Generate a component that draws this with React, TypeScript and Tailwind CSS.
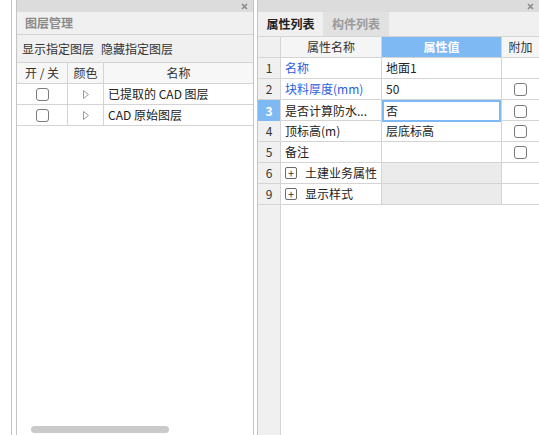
import React from "react";

const font = { fontFamily: '"Noto Sans CJK SC", "Noto Sans", sans-serif' };

function Box() {
  return <div className="w-[13px] h-[13px] rounded-[3px] border border-[#7a7a7a] bg-white" />;
}

function PlusBox() {
  return (
    <div className="w-[12px] h-[12px] rounded-[2px] border border-[#6a6a6a] bg-white flex items-center justify-center text-[11px] leading-none text-[#333]">
      +
    </div>
  );
}

function TitleBar() {
  return (
    <div className="h-[12px] bg-[#dcdcdc] flex items-center justify-end pr-[5px]">
      <svg width="7" height="7" viewBox="0 0 7 7">
        <path d="M1 1 L6 6 M6 1 L1 6" stroke="#8a8a8a" strokeWidth="1.6" />
      </svg>
    </div>
  );
}

const layers = ["已提取的 CAD 图层", "CAD 原始图层"];

type Row = {
  n: string;
  name: string;
  value: string;
  blue?: boolean;
  check?: boolean;
  selected?: boolean;
  group?: boolean;
};

const rows: Row[] = [
  { n: "1", name: "名称", value: "地面1", blue: true },
  { n: "2", name: "块料厚度(mm)", value: "50", blue: true, check: true },
  { n: "3", name: "是否计算防水...", value: "否", check: true, selected: true },
  { n: "4", name: "顶标高(m)", value: "层底标高", check: true },
  { n: "5", name: "备注", value: "", check: true },
  { n: "6", name: "土建业务属性", value: "", group: true },
  { n: "9", name: "显示样式", value: "", group: true },
];

export default function App() {
  return (
    <div className="flex h-[435px] w-[539px] bg-white text-[12px] text-[#222] overflow-hidden" style={font}>
      <div className="w-[11px]" />
      <div className="w-[5px] border-l border-[#c4c4c4]" />

      {/* 图层管理 */}
      <div className="w-[238px] border-x border-[#c4c4c4] flex flex-col">
        <TitleBar />
        <div className="h-[23px] bg-[#f0f0f0] border-b border-[#d4d4d4] flex items-center pl-[8px] text-[#8a8a8a] font-bold">
          图层管理
        </div>
        <div className="h-[28px] bg-[#f0f0f0] border-b border-[#d4d4d4] flex items-center pl-[5px] gap-[7px] text-[#333]">
          <span>显示指定图层</span>
          <span>隐藏指定图层</span>
        </div>
        <div className="grid grid-cols-[51px_36px_1fr] h-[21px] bg-[#f7f7f7] border-b border-[#d4d4d4] text-[#333]">
          <div className="border-r border-[#d4d4d4] flex items-center justify-center">开 / 关</div>
          <div className="border-r border-[#d4d4d4] flex items-center justify-center">颜色</div>
          <div className="flex items-center justify-center">名称</div>
        </div>
        {layers.map((l) => (
          <div key={l} className="grid grid-cols-[51px_36px_1fr] h-[21px] border-b border-[#d4d4d4]">
            <div className="border-r border-[#d4d4d4] flex items-center justify-center">
              <Box />
            </div>
            <div className="border-r border-[#d4d4d4] flex items-center justify-center">
              <svg width="6" height="9" viewBox="0 0 6 9">
                <path d="M0.5 0.5 L5.5 4.5 L0.5 8.5 Z" fill="none" stroke="#9a9a9a" strokeWidth="1" />
              </svg>
            </div>
            <div className="flex items-center pl-[4px]">{l}</div>
          </div>
        ))}
        <div className="flex-1 flex items-end pl-[14px] pb-[2px]">
          <div className="w-[138px] h-[7px] rounded-full bg-[#cacaca]" />
        </div>
      </div>

      <div className="w-[3px]" />

      {/* 属性列表 */}
      <div className="flex-1 border-l border-[#c4c4c4] flex flex-col">
        <TitleBar />
        <div className="h-[25px] bg-[#f0f0f0] border-b border-[#d4d4d4] flex">
          <div className="w-[65px] flex items-center justify-center text-[#222] font-bold">属性列表</div>
          <div className="w-[66px] bg-[#e1e1e1] flex items-center justify-center text-[#9a9a9a] font-bold">构件列表</div>
        </div>
        <div className="flex-1 flex flex-col">
          <div className="grid grid-cols-[23px_101px_119px_1fr] h-[21px] border-b border-[#d4d4d4]">
            <div className="bg-[#f0f0f0] border-r border-[#d4d4d4]" />
            <div className="bg-[#f5f5f5] border-r border-[#d4d4d4] flex items-center justify-center text-[#333]">属性名称</div>
            <div className="bg-[#7fb9f4] flex items-center justify-center text-white font-bold">属性值</div>
            <div className="bg-[#f5f5f5] border-l border-[#d4d4d4] flex items-center justify-center text-[#333]">附加</div>
          </div>
          {rows.map((r) => (
            <div key={r.n} className="grid grid-cols-[23px_101px_119px_1fr] h-[21px] border-b border-[#d4d4d4]">
              <div
                className={
                  r.selected
                    ? "bg-[#7fb9f4] text-white font-bold border-r border-[#d4d4d4] flex items-center justify-center"
                    : "bg-[#f0f0f0] text-[#333] border-r border-[#d4d4d4] flex items-center justify-center"
                }
              >
                {r.n}
              </div>
              <div
                className={
                  r.blue
                    ? "border-r border-[#d4d4d4] flex items-center pl-[4px] text-[#2b5ee0]"
                    : "border-r border-[#d4d4d4] flex items-center pl-[4px] gap-[8px]"
                }
              >
                {r.group && <PlusBox />}
                <span>{r.name}</span>
              </div>
              <div
                className={
                  r.selected
                    ? "border-2 border-[#7fb9f4] flex items-center pl-[2px]"
                    : r.group
                    ? "bg-[#ebebeb] flex items-center pl-[4px]"
                    : "flex items-center pl-[4px]"
                }
              >
                {r.value}
              </div>
              <div className="border-l border-[#d4d4d4] flex items-center justify-center">
                {r.check && <Box />}
              </div>
            </div>
          ))}
          <div className="flex-1 flex">
            <div className="w-[23px] bg-[#f0f0f0] border-r border-[#d4d4d4]" />
          </div>
        </div>
      </div>
    </div>
  );
}
